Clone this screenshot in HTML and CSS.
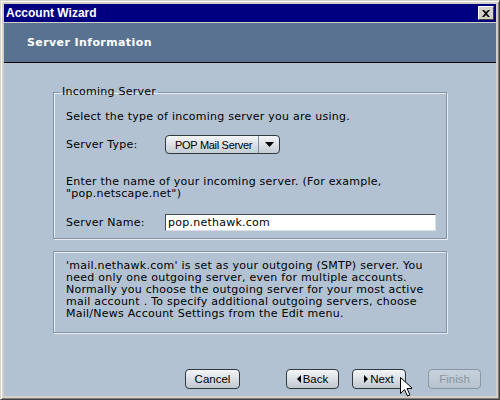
FILE: index.html
```html
<!DOCTYPE html>
<html>
<head>
<meta charset="utf-8">
<link rel="stylesheet" href="styles.css">
</head>
<body>
<div class="window">
  <div class="titlebar">
    <span class="title">Account Wizard</span>
    <span class="close"><svg width="8" height="7" viewBox="0 0 8 7"><path d="M0 0h2l2 2 2-2h2L5 3.5 8 7H6L4 5 2 7H0l3-3.5z" fill="#000"/></svg></span>
  </div>
  <div class="sep"></div>
  <div class="header">Server Information</div>
  <div class="body">
    <fieldset class="group">
      <legend>Incoming Server</legend>
      <div class="group-inner">
        <p class="line first">Select the type of incoming server you are using.</p>
        <div class="row type-row">
          <span class="label">Server Type:</span>
          <span class="dropdown"><span class="dd-text">POP Mail Server</span><span class="dd-btn"><svg width="9" height="5" viewBox="0 0 9 5"><path d="M0 0h9L4.5 5z" fill="#000"/></svg></span></span>
        </div>
        <p class="line para">Enter the name of your incoming server. (For example,<br>"pop.netscape.net")</p>
        <div class="row name-row">
          <span class="label">Server Name:</span>
          <span class="input">pop.nethawk.com</span>
        </div>
      </div>
    </fieldset>
    <div class="note">'mail.nethawk.com' is set as your outgoing (SMTP) server. You need only one outgoing server, even for multiple accounts. Normally you choose the outgoing server for your most active mail account . To specify additional outgoing servers, choose Mail/News Account Settings from the Edit menu.</div>
    <div class="buttons">
      <span class="btn cancel">Cancel</span>
      <span class="btn back"><svg width="4" height="8" viewBox="0 0 4 8"><path d="M4 0v8L0 4z" fill="#000"/></svg>Back</span>
      <span class="btn next"><svg width="4" height="8" viewBox="0 0 4 8"><path d="M0 0v8l4-4z" fill="#000"/></svg>Next</span>
      <span class="btn finish disabled">Finish</span>
    </div>
    <svg class="cursor" width="12" height="20" viewBox="0 0 12 20"><path d="M0.5 0.5v16l4-4 3 6.5 2.5-1-3-6.5h5.5z" fill="#fff" stroke="#000" stroke-width="1"/></svg>
  </div>
</div>
</body>
</html>
```
FILE: styles.css
```css
html, body { margin: 0; padding: 0; background: #d4d0c8; }
.window {
  width: 500px; height: 400px; box-sizing: border-box;
  border-top: 1px solid #d4d0c8; border-left: 1px solid #d4d0c8;
  border-right: 1px solid #404040; border-bottom: 1px solid #404040;
  box-shadow: inset 1px 1px 0 #ffffff, inset -1px -1px 0 #808080;
  padding: 3px;
  background: #d4d0c8;
  display: flex; flex-direction: column;
  position: relative;
}
.titlebar {
  height: 18px; background: #000080; display: flex; align-items: center;
  justify-content: space-between; padding: 0 2px 0 2px;
}
.title { color: #fff; font: bold 12px "Liberation Sans", Arial, sans-serif; }
.close {
  width: 14px; height: 12px; background: #d4d0c8;
  border-top: 1px solid #fff; border-left: 1px solid #fff;
  border-right: 1px solid #404040; border-bottom: 1px solid #404040;
  display: flex; align-items: center; justify-content: center;
}
.sep { height: 1px; background: #d4d0c8; }
.header {
  height: 39px; background: #5a7291; border-bottom: 1px solid #000;
  color: #fff; font: bold 11px "DejaVu Sans", Verdana, sans-serif;
  letter-spacing: 0.4px;
  display: flex; align-items: center; padding-left: 23px;
}
.body {
  flex: 1; background: #b2c2d2; position: relative;
  font: 11px "DejaVu Sans", Verdana, sans-serif; letter-spacing: 0.25px; color: #000;
  padding: 23px 0 0 49px;
}
.group {
  width: 394px; height: 153px; box-sizing: border-box; margin: 0; padding: 0;
  border: 1px solid #8293a8;
  box-shadow: 1px 1px 0 #e8eef4, inset 1px 1px 0 #e8eef4;
}
.group legend { margin-left: 6px; padding: 0 2px; line-height: 12px; }
.group-inner { padding: 13px 0 0 12px; }
.line { margin: 0; line-height: 12px; }
.row { display: flex; align-items: center; }
.label { width: 99px; flex-shrink: 0; }
.type-row { margin-top: 12px; }
.dropdown {
  display: flex; width: 115px; height: 19px; box-sizing: border-box;
  border: 1px solid #303840; border-radius: 4px;
  background: linear-gradient(#f4f6f8, #c4ccd4);
  font: 11px "Liberation Sans", Arial, sans-serif; letter-spacing: -0.3px;
}
.dd-text { flex: 1; display: flex; align-items: center; padding-left: 9px; white-space: nowrap; }
.dd-btn { width: 20px; flex-shrink: 0; border-left: 1px solid #8090a0; display: flex; align-items: center; justify-content: center; }
.para { margin-top: 22px; }
.name-row { margin-top: 14px; }
.input {
  width: 271px; height: 17px; box-sizing: border-box; background: #fff;
  border-top: 1px solid #404850; border-left: 1px solid #404850;
  border-right: 1px solid #d8e0e8; border-bottom: 1px solid #d8e0e8;
  padding-left: 2px; display: flex; align-items: center;
}
.note {
  width: 394px; height: 82px; box-sizing: border-box; margin-top: 12px;
  border: 1px solid #8293a8;
  box-shadow: 1px 1px 0 #e8eef4, inset 1px 1px 0 #e8eef4;
  padding: 8px 6px 0 12px; line-height: 12px;
}
.buttons { display: flex; margin-top: 36px; margin-left: 132px; letter-spacing: 0; }
.btn {
  height: 20px; box-sizing: border-box; border: 1px solid #303840; border-radius: 4px;
  background: linear-gradient(#f4f6f8, #c0c8d0);
  font: 11.5px "Liberation Sans", Arial, sans-serif;
  display: flex; align-items: center; justify-content: center; gap: 2px;
}
.cancel { width: 55px; }
.back { width: 53px; margin-left: 46px; }
.next { width: 54px; margin-left: 13px; }
.finish { width: 53px; margin-left: 22px; }
.disabled { color: #8c96a0; border-color: #8c96a0; background: linear-gradient(#c8d2dc, #b6c2ce); }
.cursor { position: absolute; left: 396px; top: 314px; }
```
